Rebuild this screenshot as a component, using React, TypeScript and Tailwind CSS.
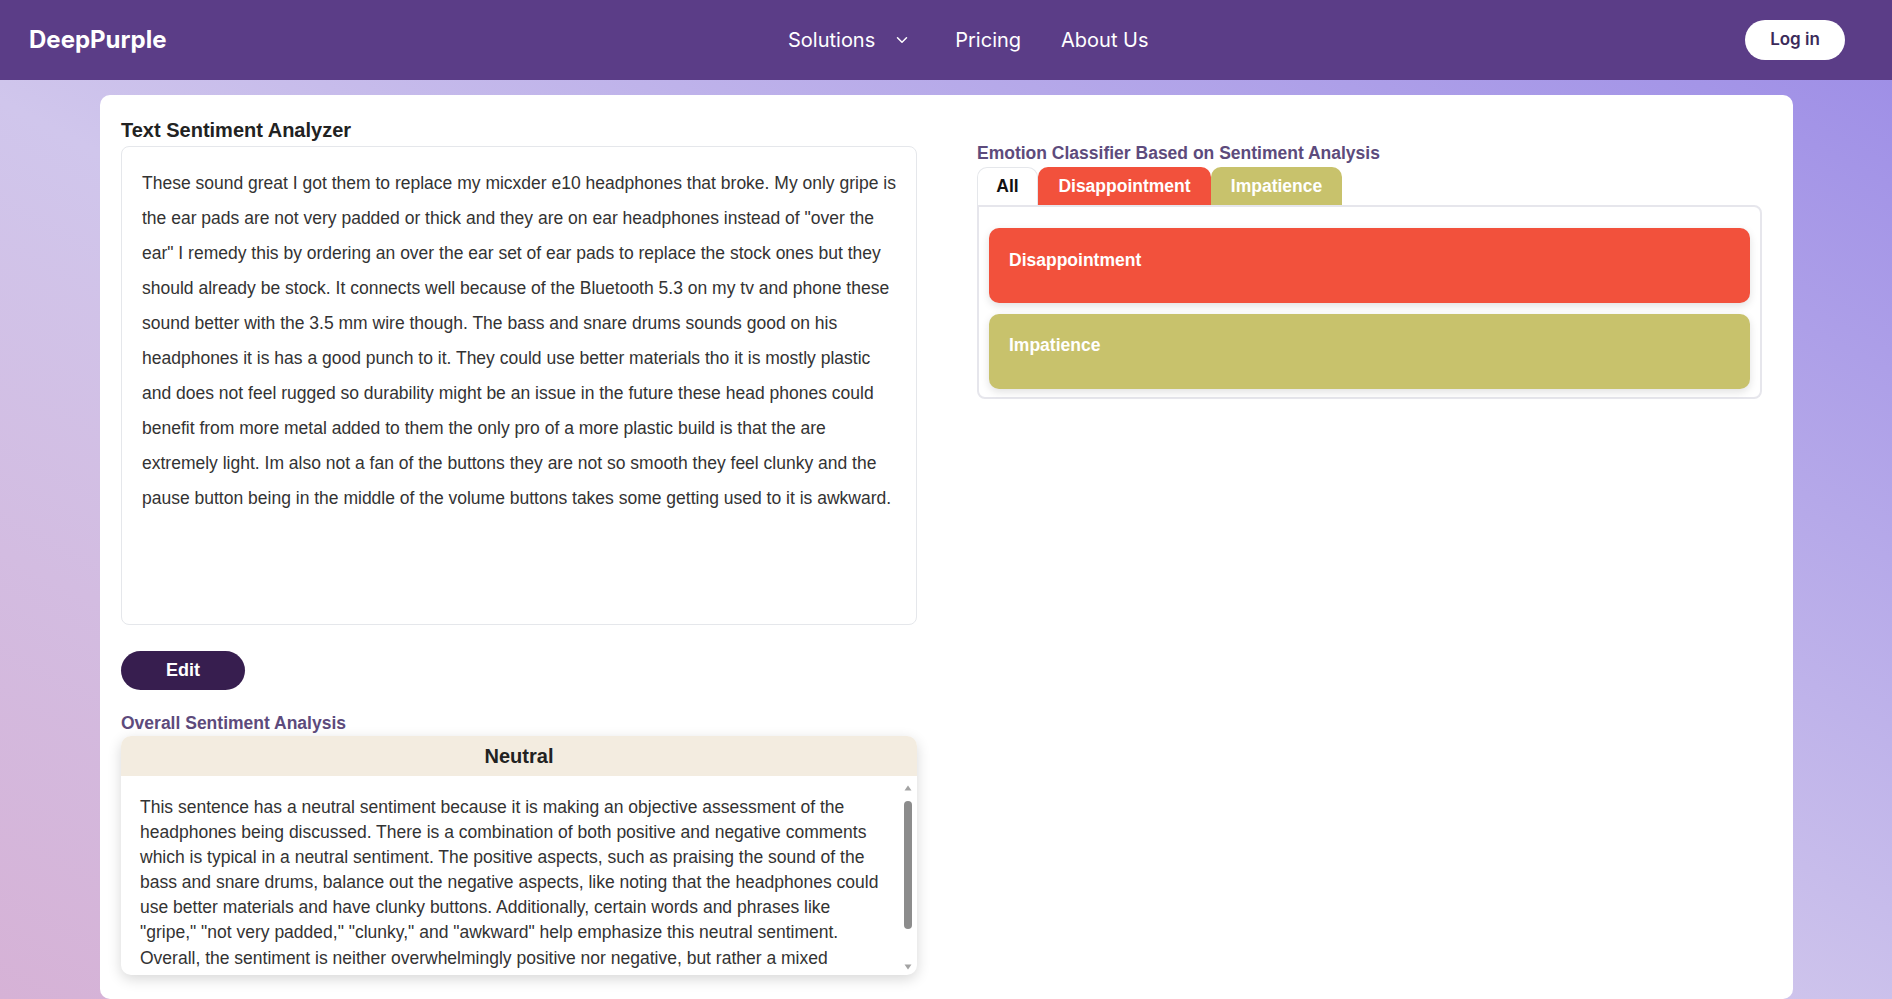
import React from "react";
import { ChevronDown } from "lucide-react";

const reviewLines = [
  "These sound great I got them to replace my micxder e10 headphones that broke. My only gripe is",
  'the ear pads are not very padded or thick and they are on ear headphones instead of "over the',
  'ear" I remedy this by ordering an over the ear set of ear pads to replace the stock ones but they',
  "should already be stock. It connects well because of the Bluetooth 5.3 on my tv and phone these",
  "sound better with the 3.5 mm wire though. The bass and snare drums sounds good on his",
  "headphones it is has a good punch to it. They could use better materials tho it is mostly plastic",
  "and does not feel rugged so durability might be an issue in the future these head phones could",
  "benefit from more metal added to them the only pro of a more plastic build is that the are",
  "extremely light. Im also not a fan of the buttons they are not so smooth they feel clunky and the",
  "pause button being in the middle of the volume buttons takes some getting used to it is awkward.",
];

const analysisLines = [
  "This sentence has a neutral sentiment because it is making an objective assessment of the",
  "headphones being discussed. There is a combination of both positive and negative comments",
  "which is typical in a neutral sentiment. The positive aspects, such as praising the sound of the",
  "bass and snare drums, balance out the negative aspects, like noting that the headphones could",
  "use better materials and have clunky buttons. Additionally, certain words and phrases like",
  '"gripe," "not very padded," "clunky," and "awkward" help emphasize this neutral sentiment.',
  "Overall, the sentiment is neither overwhelmingly positive nor negative, but rather a mixed",
];

export default function App() {
  return (
    <div className="min-h-[999px] h-[999px] overflow-hidden flex flex-col bg-[linear-gradient(to_top_right,#d6b2d6_0%,#d0c6ec_45%,#9b8be6_100%)] font-['Liberation_Sans',Arial,sans-serif]">
      {/* Header */}
      <header className="h-[80px] shrink-0 bg-[#5b3d87] flex items-center pl-[29px] pr-[47px] font-['Inter',sans-serif] text-white">
        <div className="text-[24px] font-bold w-[137px] whitespace-nowrap">DeepPurple</div>
        <nav className="ml-[622px] flex items-center text-[20px] font-normal">
          <div className="flex items-center">
            <span>Solutions</span>
            <ChevronDown className="ml-[18px] w-[18px] h-[18px]" strokeWidth={2} />
          </div>
          <span className="ml-[44px]">Pricing</span>
          <span className="ml-[40px]">About Us</span>
        </nav>
        <button className="ml-auto w-[100px] h-[40px] rounded-full bg-white text-[#3b2a5a] text-[17px] font-semibold">
          Log in
        </button>
      </header>

      {/* Main card */}
      <main className="flex-1 pt-[15px] pl-[100px] pr-[99px]">
        <div className="h-[904px] bg-white rounded-[10px] flex pl-[21px]">
          {/* Left column */}
          <section className="w-[796px] pt-[21px] flex flex-col">
            <h1 className="text-[20px] leading-[28px] font-bold text-[#222]">Text Sentiment Analyzer</h1>
            <div className="mt-[2px] h-[479px] border border-[#e5e7eb] rounded-[8px] px-5 pt-[19px] text-[17.5px] leading-[35px] text-[#333]">
              {reviewLines.map((l, i) => (
                <div key={i} className="whitespace-nowrap">{l}</div>
              ))}
            </div>
            <button className="mt-[26px] w-[124px] h-[39px] rounded-full bg-[#371e4f] text-white text-[18px] font-bold">
              Edit
            </button>
            <h2 className="mt-[23px] text-[17.5px] leading-[20px] font-bold text-[#5d4b7c]">Overall Sentiment Analysis</h2>
            <div className="mt-[3px] rounded-[10px] bg-white shadow-[0_4px_14px_rgba(0,0,0,0.16)] overflow-hidden">
              <div className="h-[40px] bg-[#f3ece0] flex items-center justify-center text-[20px] font-bold text-[#222]">
                Neutral
              </div>
              <div className="h-[199px] flex">
                <div className="flex-1 overflow-hidden pl-[19px] pt-[19px] text-[17.5px] leading-[25.1px] text-[#333]">
                  {analysisLines.map((l, i) => (
                    <div key={i} className="whitespace-nowrap">{l}</div>
                  ))}
                </div>
                {/* scrollbar */}
                <div className="w-[15px] mr-[2px] flex flex-col items-center pt-[9px] pb-[5px]">
                  <svg width="8" height="6" viewBox="0 0 8 6" className="shrink-0">
                    <path d="M4 0.5 L7.5 5.5 L0.5 5.5 Z" fill="#a3a3a3" />
                  </svg>
                  <div className="mt-[10px] w-[8px] h-[128px] rounded-full bg-[#8c8c8c]" />
                  <div className="flex-1" />
                  <svg width="8" height="6" viewBox="0 0 8 6" className="shrink-0">
                    <path d="M0.5 0.5 L7.5 0.5 L4 5.5 Z" fill="#a3a3a3" />
                  </svg>
                </div>
              </div>
            </div>
          </section>

          {/* Right column */}
          <section className="ml-[60px] w-[785px] pt-[48px] flex flex-col">
            <h2 className="text-[17.5px] leading-[20px] font-bold text-[#5d4b7c]">
              Emotion Classifier Based on Sentiment Analysis
            </h2>
            <div className="mt-[4px] flex h-[38px] text-[17.5px] font-bold">
              <div className="w-[61px] flex items-center justify-center bg-white border border-b-0 border-[#e5e7eb] rounded-t-[10px] text-[#111]">
                All
              </div>
              <div className="w-[173px] flex items-center justify-center bg-[#f2513c] text-white rounded-t-[10px]">
                Disappointment
              </div>
              <div className="w-[131px] flex items-center justify-center bg-[#c8c26c] text-white rounded-t-[10px]">
                Impatience
              </div>
            </div>
            <div className="border-2 border-[#e6e6ec] rounded-b-[8px] rounded-tr-[8px] px-[10px] pt-[21px] pb-[8px] flex flex-col gap-[11px]">
              <div className="h-[75px] rounded-[10px] bg-[#f2513c] shadow-[0_3px_8px_rgba(0,0,0,0.12)] px-5 pt-[22px] text-[17.5px] leading-[20px] font-bold text-white">
                Disappointment
              </div>
              <div className="h-[75px] rounded-[10px] bg-[#c8c26c] shadow-[0_3px_8px_rgba(0,0,0,0.12)] px-5 pt-[21px] text-[17.5px] leading-[20px] font-bold text-white">
                Impatience
              </div>
            </div>
          </section>
        </div>
      </main>
    </div>
  );
}
